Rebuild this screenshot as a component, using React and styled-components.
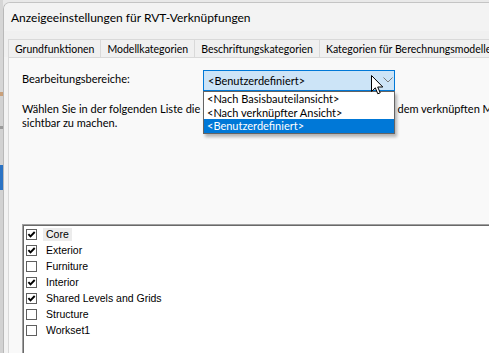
import React from "react";
import styled, { createGlobalStyle } from "styled-components";

const GlobalStyle = createGlobalStyle`
  html, body { margin: 0; padding: 0; width: 489px; height: 353px; overflow: hidden; background: #e6e6e6; }
  #root { width: 489px; height: 353px; }
`;

const UI_FONT = `Lato, "Noto Sans", sans-serif`;

const Screen = styled.div`
  display: flex;
  width: 489px;
  height: 353px;
  overflow: hidden;
  padding-top: 2px;
  box-sizing: border-box;
  background: #e9e9e9;
`;

const DesktopStrip = styled.div`
  width: 3px;
  flex: none;
  background: linear-gradient(
    to bottom,
    #d6d6d6 0px, #d6d6d6 92px,
    #c9a07a 92px, #c9a07a 96px,
    #d2d2d2 96px, #d2d2d2 126px,
    #9a9a9a 126px, #9a9a9a 129px,
    #d2d2d2 129px, #d2d2d2 165px,
    #2b73c4 165px, #2b73c4 190px,
    #d2d2d2 190px
  );
  margin-top: -2px;
`;

const Window = styled.div`
  flex: 1;
  display: flex;
  flex-direction: column;
  min-width: 0;
  background: #f3f3f3;
  border-left: 1px solid #b9b9b9;
  border-top: 1px solid #c4c4c4;
  border-top-left-radius: 7px;
  overflow: hidden;
  font-family: ${UI_FONT};
  font-size: 11px;
  color: #000;
`;

const TitleBar = styled.div`
  height: 28px;
  flex: none;
  display: flex;
  align-items: center;
  padding-left: 7px;
  background: #f3f3f3;
  font-size: 12px;
  white-space: nowrap;
`;

const TabStrip = styled.div`
  display: flex;
  flex: none;
  padding: 8px 0 0 4px;
  background: #f0f0f0;
  white-space: nowrap;
  font-size: 10.5px;
`;

const Tab = styled.div`
  flex: none;
  height: 18px;
  box-sizing: border-box;
  display: flex;
  align-items: center;
  padding: 1px 6px 0;
  border: 1px solid #d9d9d9;
  border-bottom: none;
  margin-left: -1px;
  background: #f0f0f0;
  &:first-child { margin-left: 0; }
`;

const TabPanel = styled.div`
  flex: 1;
  margin-left: 4px;
  background: #f9f9f9;
  border-left: 1px solid #d9d9d9;
  border-top: 1px solid #d9d9d9;
  padding: 12px 0 0 13px;
  display: flex;
  flex-direction: column;
  min-height: 0;
`;

const FieldRow = styled.div`
  display: flex;
  align-items: flex-start;
`;

const FieldLabel = styled.div`
  width: 181px;
  flex: none;
  padding-top: 2px;
  white-space: nowrap;
`;

const ComboWrap = styled.div`
  position: relative;
  width: 192px;
  flex: none;
`;

const Combo = styled.div`
  height: 21px;
  box-sizing: border-box;
  border: 1px solid #0078d7;
  background: #cce4f7;
  display: flex;
  align-items: center;
  padding-left: 4px;
  white-space: nowrap;
`;

const Chevron = styled.svg`
  position: absolute;
  right: 2px;
  top: 7px;
`;

const Cursor = styled.svg`
  position: absolute;
  left: 168px;
  top: 5px;
  z-index: 3;
`;

const DropList = styled.div`
  position: absolute;
  top: 100%;
  left: 0;
  width: 192px;
  box-sizing: border-box;
  background: #fff;
  border: 1px solid #646464;
  box-shadow: 2px 3px 3px rgba(0, 0, 0, 0.28);
  z-index: 2;
`;

const DropItem = styled.div`
  height: 13.5px;
  line-height: 13.5px;
  padding-left: 3px;
  white-space: nowrap;
  background: ${(p) => (p.$selected ? "#0078d7" : "transparent")};
  color: ${(p) => (p.$selected ? "#fff" : "#000")};
`;

const Paragraph = styled.div`
  margin-top: 11px;
  line-height: 13.5px;
  white-space: nowrap;
`;

const ListBox = styled.div`
  margin-top: 95px;
  width: 520px;
  height: 150px;
  flex: none;
  background: #fff;
  border-top: 1px solid #a0a0a0;
  border-left: 1px solid #a0a0a0;
  box-shadow: inset 1px 1px 0 #696969;
  padding: 1px 0 0 3px;
  box-sizing: border-box;
  font-family: "Liberation Sans", Arial, sans-serif;
  font-size: 10.5px;
`;

const Row = styled.div`
  height: 16.15px;
  display: flex;
  align-items: center;
`;

const RowLabel = styled.span`
  margin-left: 6px;
  padding: 0 3px;
  height: 13px;
  line-height: 13px;
  background: ${(p) => (p.$focused ? "#ececec" : "transparent")};
  white-space: nowrap;
`;

const CheckBox = ({ checked }) => (
  <svg width="11" height="11" viewBox="0 0 11 11" style={{ flex: "none" }}>
    <rect x="0.5" y="0.5" width="10" height="10" fill="#fff" stroke="#5f5f5f" />
    {checked && (
      <path d="M2.4 5.2 L4.5 7.4 L8.7 3" fill="none" stroke="#000" strokeWidth="1.9" />
    )}
  </svg>
);

const items = [
  { name: "Core", checked: true, focused: true },
  { name: "Exterior", checked: true },
  { name: "Furniture", checked: false },
  { name: "Interior", checked: true },
  { name: "Shared Levels and Grids", checked: true },
  { name: "Structure", checked: false },
  { name: "Workset1", checked: false },
];

export default function App() {
  return (
    <>
      <GlobalStyle />
      <Screen>
        <DesktopStrip />
        <Window>
          <TitleBar>Anzeigeeinstellungen für RVT-Verknüpfungen</TitleBar>
          <TabStrip>
            <Tab>Grundfunktionen</Tab>
            <Tab>Modellkategorien</Tab>
            <Tab>Beschriftungskategorien</Tab>
            <Tab>Kategorien für Berechnungsmodelle</Tab>
          </TabStrip>
          <TabPanel>
            <FieldRow>
              <FieldLabel>Bearbeitungsbereiche:</FieldLabel>
              <ComboWrap>
                <Combo>&lt;Benutzerdefiniert&gt;</Combo>
                <Chevron width="10" height="6" viewBox="0 0 10 6">
                  <path d="M0.5 0.5 L5 5 L9.5 0.5" fill="none" stroke="#7a7a7a" strokeWidth="1" />
                </Chevron>
                <Cursor width="13" height="20" viewBox="0 0 13 20">
                  <path
                    d="M0.5 0.5 L0.5 16.5 L4.3 12.8 L6.8 18.8 L9.2 17.8 L6.7 12 L11.8 12 Z"
                    fill="#fff"
                    stroke="#000"
                    strokeWidth="1"
                    strokeLinejoin="round"
                  />
                </Cursor>
                <DropList>
                  <DropItem>&lt;Nach Basisbauteilansicht&gt;</DropItem>
                  <DropItem>&lt;Nach verknüpfter Ansicht&gt;</DropItem>
                  <DropItem $selected>&lt;Benutzerdefiniert&gt;</DropItem>
                </DropList>
              </ComboWrap>
            </FieldRow>
            <Paragraph>
              Wählen Sie in der folgenden Liste die gewünschten Teilbereiche aus, um sie in dem verknüpften Modell
              <br />
              sichtbar zu machen.
            </Paragraph>
            <ListBox>
              {items.map((it) => (
                <Row key={it.name}>
                  <CheckBox checked={it.checked} />
                  <RowLabel $focused={it.focused}>{it.name}</RowLabel>
                </Row>
              ))}
            </ListBox>
          </TabPanel>
        </Window>
      </Screen>
    </>
  );
}
